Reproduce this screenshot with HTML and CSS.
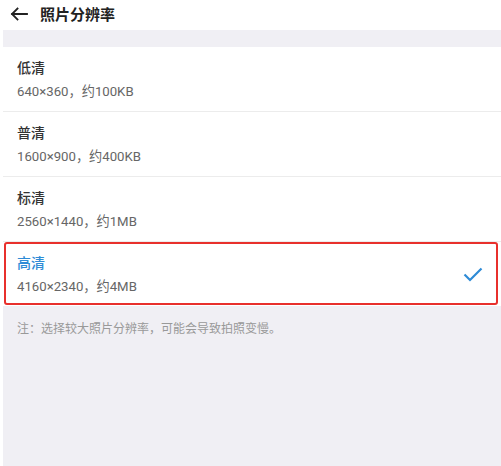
FILE: index.html
```html
<!DOCTYPE html>
<html lang="zh-CN">
<head>
<meta charset="utf-8">
<link rel="stylesheet" href="styles.css">
</head>
<body>
<div class="page">
  <header class="topbar">
    <svg class="back" width="18" height="14" viewBox="0 0 18 14">
      <path d="M17 7H2M7.5 1.5L2 7l5.5 5.5" fill="none" stroke="#222" stroke-width="1.8" stroke-linecap="square"/>
    </svg>
    <span class="title">照片分辨率</span>
  </header>
  <main class="content">
    <div class="gap"></div>
    <ul class="list">
      <li class="item">
        <div class="texts"><div class="name">低清</div><div class="desc">640×360，约100KB</div></div>
      </li>
      <li class="item">
        <div class="texts"><div class="name">普清</div><div class="desc">1600×900，约400KB</div></div>
      </li>
      <li class="item">
        <div class="texts"><div class="name">标清</div><div class="desc">2560×1440，约1MB</div></div>
      </li>
      <li class="item selected">
        <div class="texts"><div class="name">高清</div><div class="desc">4160×2340，约4MB</div></div>
        <svg class="check" width="20" height="15" viewBox="0 0 20 15">
          <path d="M1.5 7.5l5.5 5.5L18.5 1.5" fill="none" stroke="#2e8bd6" stroke-width="2.2"/>
        </svg>
      </li>
    </ul>
    <p class="note">注：选择较大照片分辨率，可能会导致拍照变慢。</p>
  </main>
</div>
</body>
</html>
```
FILE: styles.css
```css
* { box-sizing: border-box; }
html, body { margin: 0; padding: 0; background: #fff; }
body {
  font-family: "Noto Sans CJK SC", "Noto Sans", sans-serif;
  width: 501px;
  height: 466px;
  overflow: hidden;
}
.page { display: flex; flex-direction: column; height: 466px; }
.topbar {
  height: 30px;
  display: flex;
  align-items: center;
  padding-left: 10px;
  background: #fff;
}
.back { display: block; margin-top: -3px; }
.title {
  margin-left: 12px;
  font-size: 15px;
  font-weight: bold;
  color: #222;
  margin-top: -4px;
}
.content {
  flex: 1;
  margin-left: 3px;
  background: #f0eff4;
  display: flex;
  flex-direction: column;
}
.gap { height: 17px; }
.list {
  list-style: none;
  margin: 0;
  padding: 0;
  background: #fff;
}
.item {
  position: relative;
  height: 65px;
  display: flex;
  align-items: center;
  padding-left: 14px;
  padding-right: 16px;
  border-bottom: 1px solid #ececec;
}
.item:last-child { border-bottom: none; height: 64px; }
.texts { flex: 1; display: flex; flex-direction: column; gap: 5px; }
.name { font-size: 14px; color: #333; line-height: 20px; font-weight: 500; }
.desc {
  font-family: Roboto, "Noto Sans CJK SC", sans-serif;
  font-size: 13.2px;
  color: #666;
  line-height: 20px;
}
.selected .name { color: #2e8bd6; }
.selected::after {
  content: "";
  position: absolute;
  left: 1px;
  top: 0;
  right: 3px;
  bottom: 1px;
  border: 2px solid #e8302c;
  border-radius: 3px;
}
.check { margin-right: 2px; margin-top: 1px; }
.note {
  margin: 13px 0 0 14px;
  font-size: 12px;
  color: #999;
  line-height: 18px;
}
```
